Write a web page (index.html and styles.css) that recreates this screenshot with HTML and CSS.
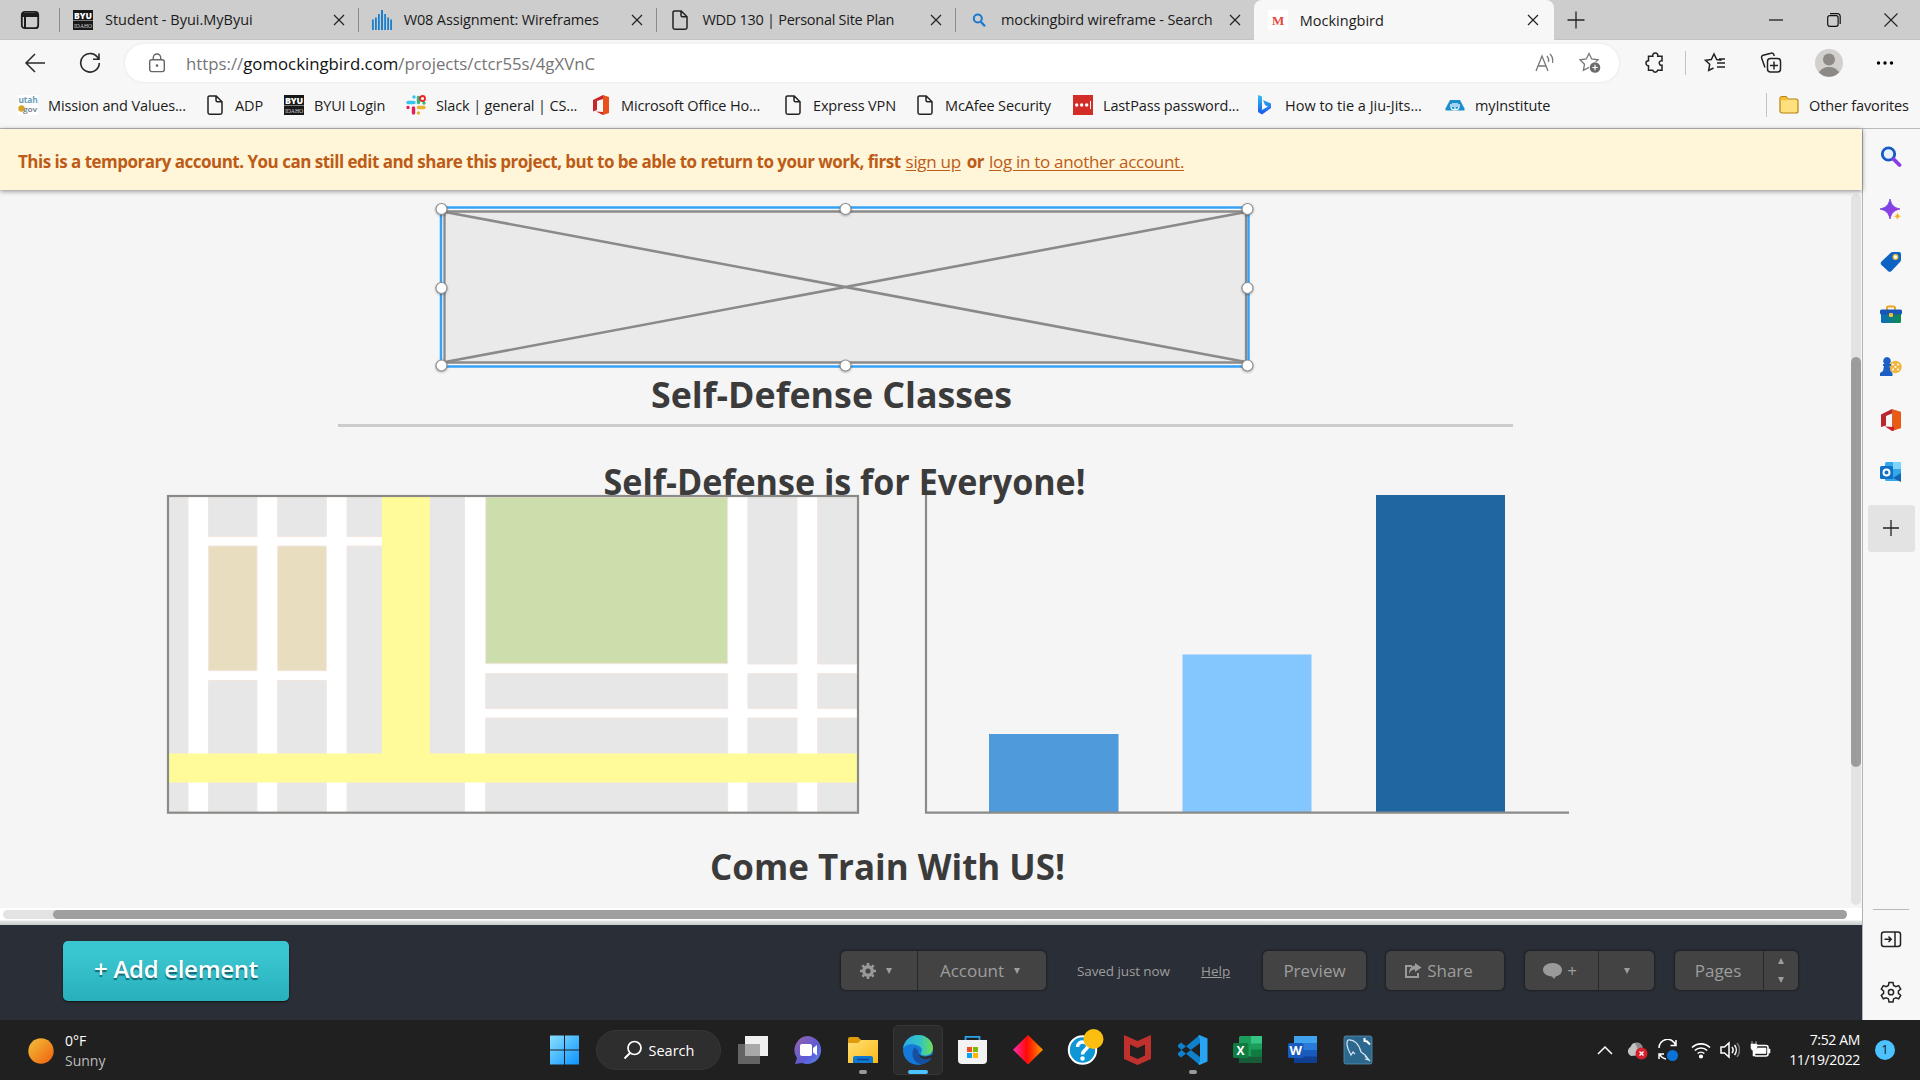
FILE: index.html
```html
<!DOCTYPE html>
<html lang="en">
<head>
<meta charset="utf-8">
<title>Mockingbird</title>
<link rel="stylesheet" href="styles.css">
</head>
<body>
<svg class="defs" width="0" height="0">
  <defs>
    <symbol id="doc" viewBox="0 0 20 20"><path d="M4 .9h7.2L17 6.700V17.500a1.700 1.700 0 0 1-1.700 1.700H4.700A1.700 1.700 0 0 1 3 17.500V2.500A1.600 1.600 0 0 1 4.600.9M11 1v4.300a1.500 1.500 0 0 0 1.500 1.500H17" fill="none" stroke="#222" stroke-width="1.500"/></symbol>
    <symbol id="byu" viewBox="0 0 20 20"><path fill="#181818" d="M0 0h20v20H0z"/><path stroke="#999" stroke-width=".8" d="M0 10.500h20"/><text x="1" y="8.500" font-size="8" font-weight="900" textLength="18" lengthAdjust="spacingAndGlyphs" fill="#fff">BYU</text><text x="1" y="18" font-size="7" textLength="18" lengthAdjust="spacingAndGlyphs" font-family="Liberation Serif" fill="#ccc">IDAHO</text></symbol>
    <symbol id="x" viewBox="0 0 12 12"><path d="m1 1 10 10M11 1 1 11" fill="none" stroke="#222" stroke-width="1.200"/></symbol>
    <symbol id="office" viewBox="0 0 20 20"><path fill="#c9252d" d="M2 5 12 0v4L6 6v9l-4 1.500z"/><path fill="#e8501c" d="m12 0 6 2v16l-6 2z"/><path fill="#d52b1e" d="m5 16.500 7 .5v3z"/></symbol>
    <linearGradient id="gw" x2="1" y2="1"><stop stop-color="#8be0ff"/><stop offset="1" stop-color="#0a93ff"/></linearGradient>
    <linearGradient id="gsun" x2="1" y2="1"><stop stop-color="#f2c23a"/><stop offset="1" stop-color="#ef5f0c"/></linearGradient>
    <linearGradient id="gchat" x2="1" y2="1"><stop stop-color="#9a62a8"/><stop offset=".6" stop-color="#5b5bd6"/><stop offset="1" stop-color="#5a8af0"/></linearGradient>
    <linearGradient id="gfold" x2="1" y2="1"><stop stop-color="#ffdf75"/><stop offset="1" stop-color="#fbb917"/></linearGradient>
    <linearGradient id="gedge"><stop stop-color="#2aa9e8"/><stop offset=".6" stop-color="#35c5c0"/><stop offset="1" stop-color="#6ee04f"/></linearGradient>
    <linearGradient id="gdia"><stop stop-color="#ff2ab0"/><stop offset=".45" stop-color="#ff0a0a"/><stop offset=".6" stop-color="#ff2a00"/><stop offset="1" stop-color="#ff9c00"/></linearGradient>
    <linearGradient id="gbing" x2="0" y2="1"><stop stop-color="#2fc0f5"/><stop offset="1" stop-color="#1a56e8"/></linearGradient>
    <linearGradient id="gcopilot" x2="1" y2="1"><stop stop-color="#4a55e8"/><stop offset="1" stop-color="#c02ce0"/></linearGradient>
    <linearGradient id="gtool"><stop stop-color="#0a6cc4"/><stop offset="1" stop-color="#118a4a"/></linearGradient>
  </defs>
</svg>

<header class="tabs">
  <div class="tab-menu"><svg width="20" height="20" viewBox="0 0 20 20"><rect x="1.800" y="1.800" width="16.400" height="16.400" rx="3" fill="none" stroke="#1c1c1c" stroke-width="1.800"/><path d="M2 3h16v4H6v11H4V7H2z" fill="#1c1c1c"/></svg></div>
  <div class="tab"><svg class="fav"><use href="#byu"/></svg><span class="tab-title">Student - Byui.MyByui</span><svg class="close"><use href="#x"/></svg></div>
  <div class="tab"><svg class="fav" viewBox="0 0 20 20"><path fill="#1a7fcc" d="M0 9.500h1.800V20H0zM3 7.500h1.800V20H3zM6 4h1.800v16H6zM9 0h2v20H9zM12.200 4H14v16h-1.800zM15.200 7.500H17V20h-1.800zM18.200 9.500H20V20h-1.800z"/></svg><span class="tab-title tight">W08 Assignment: Wireframes</span><svg class="close"><use href="#x"/></svg></div>
  <div class="tab"><svg class="fav"><use href="#doc"/></svg><span class="tab-title tighter">WDD 130 | Personal Site Plan</span><svg class="close"><use href="#x"/></svg></div>
  <div class="tab"><svg class="fav" viewBox="0 0 20 20"><circle cx="8.800" cy="8.500" r="4" fill="none" stroke="#1a78d0" stroke-width="2"/><path d="m12 12 4 4.300" stroke="#1a78d0" stroke-width="2.400"/></svg><span class="tab-title tight">mockingbird wireframe - Search</span><svg class="close"><use href="#x"/></svg></div>
  <div class="tab active"><svg class="fav" viewBox="0 0 20 20"><path fill="#fff" d="M0 0h20v20H0z"/><text x="4" y="14.500" font-family="Liberation Serif" font-weight="700" font-size="13" fill="#e8453c">M</text></svg><span class="tab-title">Mockingbird</span><svg class="close"><use href="#x"/></svg></div>
  <svg class="newtab" width="18" height="18" viewBox="0 0 18 18"><path d="M9 .5v17M.5 9h17" stroke="#222" stroke-width="1.300"/></svg>
  <div class="winbtns">
    <svg width="14" height="14" viewBox="0 0 14 14"><path d="M0 7h14" stroke="#111" stroke-width="1.200"/></svg>
    <svg width="14" height="14" viewBox="0 0 14 14"><rect x=".7" y="2.700" width="10.400" height="10.600" rx="2" fill="none" stroke="#111" stroke-width="1.200"/><path d="M3 .7h7.500a2.700 2.700 0 0 1 2.700 2.700V11" fill="none" stroke="#111" stroke-width="1.200"/></svg>
    <svg width="14" height="14" viewBox="0 0 14 14"><path d="m.5.5 13 13m0-13-13 13" stroke="#222" stroke-width="1.100"/></svg>
  </div>
</header>

<div class="toolbar">
  <svg class="back" width="22" height="20" viewBox="0 0 22 20"><path d="M21 10H2m9-9-9 9 9 9" fill="none" stroke="#2a2a2a" stroke-width="1.500"/></svg>
  <svg class="reload" width="22" height="22" viewBox="0 0 22 22"><path d="M19.500 7A9.300 9.300 0 1 0 20.300 11M20 1.500V7.300h-6" fill="none" stroke="#2a2a2a" stroke-width="1.600"/></svg>
  <div class="url">
    <svg width="18" height="20" viewBox="0 0 18 20"><rect x="1.700" y="6.800" width="14.600" height="11.800" rx="2" fill="none" stroke="#666" stroke-width="1.400"/><path d="M5.300 6.500V4.700a3.700 3.700 0 0 1 7.400 0v1.800" fill="none" stroke="#666" stroke-width="1.400"/><circle cx="9" cy="12.600" r="1.300" fill="#666"/></svg>
    <span class="address">https://<b>gomockingbird.com</b>/projects/ctcr55s/4gXVnC</span>
    <svg width="20" height="20" viewBox="0 0 20 20" fill="none" stroke="#777" stroke-width="1.300"><path d="M1 18 7 3l6 15M3 13h8M12 3a7 7 0 0 1 1.500 6M15 1a10 10 0 0 1 2.500 9"/></svg>
    <svg class="star" width="22" height="22" viewBox="0 0 22 22"><path d="M10 1.500 12.700 7l6.300.8-4.600 4.400 1.100 6.200L10 15.500 4.400 18.400l1.100-6.200L1 7.800 7.300 7z" fill="none" stroke="#777" stroke-width="1.300"/><circle cx="16" cy="15.500" r="6" fill="#fff"/><circle cx="16" cy="15.500" r="5.300" fill="#6b6b6b"/><path d="M16 12.800v5.400M13.300 15.500h5.400" stroke="#fff" stroke-width="1.200"/></svg>
  </div>
  <div class="actions">
    <svg width="22" height="22" viewBox="0 0 22 22"><path d="M4.500 4.300h4.300a2.600 2.600 0 1 1 5 0h4.200v4.500a2.300 2.300 0 1 0 0 4.500v5h-4.300a2.600 2.600 0 0 1-5 0H4.500v-4.500a2.500 2.500 0 1 1 0-5z" fill="none" stroke="#222" stroke-width="1.500"/></svg>
    <i class="sep"></i>
    <svg width="22" height="22" viewBox="0 0 22 22"><path d="M17.500 8.200 12.700 7.500 10 2 7.300 7.500 1.500 8.300l4.200 4-1 6.200L9.500 16M13 11h8M13 15h8M15 7h6" fill="none" stroke="#222" stroke-width="1.500"/></svg>
    <svg width="22" height="22" viewBox="0 0 22 22"><rect x="7.500" y="6.500" width="13" height="13.500" rx="3" fill="none" stroke="#222" stroke-width="1.500"/><path d="M14 9.500v8M10 13.500h8M5 15.500 1.700 6.200a2.200 2.200 0 0 1 1.500-3L11 1.200A2.300 2.300 0 0 1 14 3v1" fill="none" stroke="#222" stroke-width="1.500"/></svg>
    <svg width="28" height="28" viewBox="0 0 28 28"><circle cx="14" cy="14" r="14" fill="#d2d0cd"/><circle cx="14" cy="10.500" r="6" fill="#8d8985"/><path d="M4 23.500c3-7.500 17-7.500 20 0a14 14 0 0 1-20 0" fill="#8d8985"/></svg>
    <svg width="18" height="6" viewBox="0 0 18 6"><circle cx="2.500" cy="3" r="1.700"/><circle cx="9" cy="3" r="1.700"/><circle cx="15.500" cy="3" r="1.700"/></svg>
  </div>
</div>

<nav class="bookmarks">
  <a><svg viewBox="0 0 20 20"><path fill="#fff" d="M0 0h20v20H0z"/><circle cx="3.500" cy="13.500" r="3.200" fill="#d9a520"/><text x=".5" y="8" font-size="8" font-weight="700" fill="#6a9ab5" textLength="19" lengthAdjust="spacingAndGlyphs">utah</text><text x="5" y="17" font-size="7" font-weight="700" fill="#7f8b94" textLength="14" lengthAdjust="spacingAndGlyphs">gov</text></svg>Mission and Values...</a>
  <a><svg><use href="#doc"/></svg>ADP</a>
  <a><svg><use href="#byu"/></svg>BYUI Login</a>
  <a><svg viewBox="0 0 20 20" fill="none" stroke-width="3.400" stroke-linecap="round"><path stroke="#36c5f0" d="M8 2v0M2 7.500h6"/><path stroke="#2eb67d" d="M12.500 2.500v5M18 8v0"/><path stroke="#ecb22e" d="M12.500 12.500h5.500M12.500 18v0"/><path stroke="#e01e5a" d="M7.500 13v5M2 12.500v0"/><circle cx="16.500" cy="3.500" r="2.500" stroke="#e22" fill="#fff" stroke-width="1.800"/></svg>Slack | general | CS...</a>
  <a><svg><use href="#office"/></svg>Microsoft Office Ho...</a>
  <a><svg><use href="#doc"/></svg>Express VPN</a>
  <a><svg><use href="#doc"/></svg>McAfee Security</a>
  <a><svg viewBox="0 0 20 20"><path fill="#d32d27" d="M0 0h20v20H0z"/><circle cx="3.700" cy="10" r="1.700" fill="#fff"/><circle cx="8.700" cy="10" r="1.700" fill="#fff"/><circle cx="13.700" cy="10" r="1.700" fill="#fff"/><path d="M17.500 6v8" stroke="#fff"/></svg>LastPass password...</a>
  <a class="bing"><svg viewBox="0 0 20 20"><path fill="url(#gbing)" d="m3 0 4 1.500V15l6-3.500-3-1.500-2-5 8 3.500v4.500L7 19.500l-4-2.500z"/></svg>How to tie a Jiu-Jits...</a>
  <a><svg viewBox="0 0 20 20"><path fill="#1a8fd0" d="M5 5h10l4.500 8.500v2H.5v-2z"/><path d="M6 9v3a3.500 2.500 0 0 0 8 0V9M10 8v6M8 8v4M12 8v4" fill="none" stroke="#fff" stroke-width="1.200"/></svg>myInstitute</a>
  <i class="sep"></i>
  <a><svg viewBox="0 0 20 20"><path d="M1 3.500a2 2 0 0 1 2-2h4l2 2.500h8a2 2 0 0 1 2 2V16a2 2 0 0 1-2 2H3a2 2 0 0 1-2-2z" fill="#ffe07f" stroke="#b48210" stroke-width="1.200"/><path d="M1.500 5V3.500A1.500 1.500 0 0 1 3 2h4l1.500 2L7 5.500z" fill="#f5bf2d"/></svg>Other favorites</a>
</nav>

<div class="body">
  <main class="page">
    <div class="banner"><strong>This is a temporary account. You can still edit and share this project, but to be able to return to your work, first</strong><a class="signup">sign up</a><strong class="or">or</strong><a class="login">log in to another account.</a></div>
    <div class="workspace">
      <svg class="canvas" viewBox="0 190 1851 718" width="1851" height="718">
        <g class="headings">
          <text x="651" y="407.500" textLength="361" lengthAdjust="spacingAndGlyphs">Self-Defense Classes</text>
          <text x="603.500" y="495" textLength="482" lengthAdjust="spacingAndGlyphs">Self-Defense is for Everyone!</text>
          <text x="710" y="879.500" textLength="355" lengthAdjust="spacingAndGlyphs">Come Train With US!</text>
        </g>
        <path d="M338 425.500h1175" stroke="#ccc" stroke-width="3"/>
        <rect x="441" y="207.500" width="807.500" height="159" fill="#f8f8f8" stroke="#35a2f8" stroke-width="2.500"/>
        <rect x="444.500" y="211.500" width="801.500" height="151" rx="2" fill="#eaeaea" stroke="#8a8a8a" stroke-width="2.300"/>
        <path d="m445 212 801 150M445 362l801-150" stroke="#8a8a8a" stroke-width="2.600"/>
        <g class="handles">
          <circle cx="441.500" cy="209" r="5.500"/><circle cx="845.500" cy="209" r="5.500"/><circle cx="1247.500" cy="209" r="5.500"/>
          <circle cx="441.500" cy="288" r="5.500"/><circle cx="1247.500" cy="288" r="5.500"/>
          <circle cx="441.500" cy="365.500" r="5.500"/><circle cx="845.500" cy="365.500" r="5.500"/><circle cx="1247.500" cy="365.500" r="5.500"/>
        </g>
        <rect x="168" y="496" width="690" height="317" fill="#fff"/>
        <g fill="#e7e7e7" stroke="#f3e6e0" stroke-width="1">
          <path d="M169 497h19v256.500h-19zM208.500 497h48.500v39.500h-48.500zM277.700 497h48.600v39.500h-48.600zM347 497h35v39.500h-35zM347 546h35v207.500h-35zM208.500 680.500h48.500v73h-48.500zM277.700 680.500h48.600v73h-48.600zM429.500 497h35v256.500h-35z"/>
          <path d="M747.900 497h49.100v167h-49.100zM817.700 497h39.300v167h-39.300zM485.700 673.500h242v35h-242zM747.900 673.500h49.100v35h-49.100zM817.700 673.500h39.300v35h-39.300zM485.700 718h242v35.500h-242zM747.900 718h49.100v35.500h-49.100zM817.700 718h39.300v35.500h-39.300z"/>
          <path d="M169 782.500h19v29.500h-19zM208.500 782.500h48.500v29.500h-48.500zM277.700 782.500h48.600v29.500h-48.600zM347 782.500h117.500v29.500H347zM485.700 782.500h242v29.500h-242zM747.900 782.500h49.100v29.500h-49.100zM817.700 782.500h39.300v29.500h-39.300z"/>
          <path fill="#e8ddbf" d="M208.500 546h48.500v124.700h-48.500zM277.700 546h48.600v124.700h-48.600z"/>
          <path fill="#cbdeab" d="M485.700 497h242v166.700h-242z"/>
        </g>
        <path fill="#fffb98" d="M382 497h47.800v256.500H857v29H169v-29h213z"/>
        <rect x="168" y="496" width="690" height="316.700" fill="none" stroke="#8a8a88" stroke-width="2.200"/>
        <path fill="#4e9ada" d="M989 734h129.500v78H989z"/>
        <path fill="#84c7ff" d="M1182.500 654.500h129V812h-129z"/>
        <path fill="#2066a1" d="M1376 495h129v317h-129z"/>
        <path d="M926 495v317.700h643" fill="none" stroke="#8a8a88" stroke-width="2.200"/>
      </svg>
      <div class="vtrack"><div class="vthumb"></div></div>
    </div>
    <div class="htrack"><div class="hrail"><div class="hthumb"></div></div></div>
    <footer class="dock">
      <div class="add">+ Add element</div>
      <div class="group settings">
        <div class="cell gear"><svg width="16" height="16" viewBox="0 0 16 16"><circle cx="8" cy="8" r="4.300" fill="none" stroke="#9a9a9a" stroke-width="3.400"/><path d="M8 0v16M0 8h16M2.300 2.300l11.400 11.400M13.700 2.300 2.300 13.700" stroke="#9a9a9a" stroke-width="2.600" stroke-dasharray="2.500 11 2.500"/></svg><i class="down"></i></div>
        <div class="cell account">Account<i class="down"></i></div>
      </div>
      <span class="saved">Saved just now</span>
      <a class="help">Help</a>
      <div class="group preview"><div class="cell">Preview</div></div>
      <div class="group share"><div class="cell"><svg width="18" height="16" viewBox="0 0 18 16"><path d="M8 3H2v11h12v-4" fill="none" stroke="#9a9a9a" stroke-width="2"/><path d="M11 0l6.500 4.500L11 9V6.500C8 6.500 6.500 8 5 11c0-5 2-8 6-8.500z" fill="#9a9a9a"/></svg>Share</div></div>
      <div class="group comment">
        <div class="cell"><svg width="20" height="16" viewBox="0 0 20 16"><path d="M9.500 0C15 0 19 3 19 6.800s-2.500 5.700-6 6.500L11 16l-2-2.500C4 13.300 0 10.500 0 6.800S4 0 9.500 0" fill="#9a9a9a"/></svg><span>+</span></div>
        <div class="cell"><i class="down"></i></div>
      </div>
      <div class="group pages">
        <div class="cell">Pages</div>
        <div class="steps"><i class="up"></i><i class="down"></i></div>
      </div>
    </footer>
  </main>

  <aside class="sidebar">
    <svg viewBox="0 0 22 22"><circle cx="8.500" cy="8" r="6.200" fill="#e6f1fb" stroke="#1659c7" stroke-width="2.800"/><path d="m13.500 13 6 6" stroke="#8a3be8" stroke-width="3.800" stroke-linecap="round"/></svg>
    <svg viewBox="0 0 22 22"><path fill="url(#gcopilot)" d="M10 0c1.700 6.500 3.500 8.300 10 10-6.500 1.700-8.300 3.500-10 10C8.300 13.500 6.500 11.700 0 10 6.500 8.300 8.300 6.500 10 0" stroke="#7a3fe4" stroke-width=".8" stroke-linejoin="round"/><path fill="#f5b11c" stroke="#f7f7f7" stroke-width=".5" d="M17.500 12.500c.6 3.500 1.300 4 4.500 4.700-3.200.7-3.900 1.300-4.500 4.800-.6-3.500-1.300-4.100-4.500-4.800 3.200-.7 3.900-1.200 4.500-4.700"/></svg>
    <svg viewBox="0 0 22 22"><path fill="#0d63c4" d="M13 1h6a2 2 0 0 1 2 2v6a3 3 0 0 1-1 2l-8.500 9a2.500 2.500 0 0 1-3.500 0l-6.500-6a2.500 2.500 0 0 1 0-3.500L10.500 2A4 4 0 0 1 13 1"/><circle cx="15.500" cy="6" r="2.400" fill="#fff" stroke="#f2b52c" stroke-width="1.300"/></svg>
    <svg viewBox="0 0 22 22"><path d="M7 6V3.700A1.200 1.200 0 0 1 8.200 2.500h5.600A1.200 1.200 0 0 1 15 3.700V6" fill="none" stroke="#eaa624" stroke-width="2"/><rect x="1" y="8" width="20" height="11" rx="1.500" fill="url(#gtool)"/><rect x="0" y="5.500" width="22" height="5" rx="1.500" fill="#1856b8"/><rect x="9" y="9" width="4" height="4" rx="1" fill="#f2bd3a"/></svg>
    <svg viewBox="0 0 22 22"><circle cx="15.500" cy="11" r="6.200" fill="#f3b63c"/><path d="M13 8.500v0M18 8.500v0M13 13.500v0M18 13.500v0M15.500 11v0" stroke="#fff" stroke-width="2" stroke-linecap="round"/><path fill="#1c5fc4" d="M7 1a4 4 0 0 1 2.500 7H11v2H9.500l1 5 2 2v3H0v-3l3-2 1-5H3V8h1.500A4 4 0 0 1 7 1"/></svg>
    <svg viewBox="0 0 22 22"><path fill="#b8282e" d="M1 5.500 12 0v4.500L6 7v9.500L1 18z"/><path fill="#d8602a" d="m12 0 9 3v16l-9 3z"/><path fill="#ea5a12" d="m14 1 7 2v16l-7 2z"/><path fill="#c8202e" d="m5 17.500 9 .500v3.500l-2 .5z"/></svg>
    <svg viewBox="0 0 22 22"><rect x="5" y="1" width="16" height="19" rx="1.500" fill="#35a8ea"/><path fill="#7fd4fb" d="M13 1h8v7h-8z"/><path fill="#1066b5" d="m21 12-8 5 8 4z"/><rect x="0" y="5" width="13" height="13" rx="1.500" fill="#0f70c8"/><circle cx="6.500" cy="11.500" r="3" fill="none" stroke="#fff" stroke-width="2"/></svg>
    <div class="addside"><svg viewBox="0 0 22 22"><path d="M11 3v16M3 11h16" stroke="#222" stroke-width="1.300"/></svg></div>
    <div class="sidefoot">
      <svg viewBox="0 0 22 22" fill="none" stroke="#222" stroke-width="1.500"><rect x="1.500" y="4" width="19" height="14.500" rx="2.500"/><path d="M15 4v14.500M4.500 11.200H11M8.500 8.500l2.700 2.700L8.500 14"/></svg>
      <svg viewBox="0 0 22 22" fill="none" stroke="#222" stroke-width="1.500"><path d="M9 1.500h4l.6 3 2.200 1.200 2.900-1.100 2 3.400-2.300 2v2.400l2.300 2-2 3.400-2.900-1.100-2.200 1.200-.6 3H9l-.6-3-2.200-1.200-2.900 1.100-2-3.400 2.300-2V10L1.300 8l2-3.400 2.900 1.100 2.200-1.200z"/><circle cx="11" cy="11.200" r="2.600"/></svg>
    </div>
  </aside>
</div>

<div class="taskbar">
  <div class="weather"><svg width="26" height="26" viewBox="0 0 26 26"><circle cx="13" cy="13" r="12.700" fill="url(#gsun)"/></svg><div>0°F<br><span>Sunny</span></div></div>
  <div class="apps">
    <div class="app"><svg viewBox="0 0 30 30"><path fill="url(#gw)" d="M0 .5h14v14H0zM15 .5H29v14h-14zM0 15.500h14v14H0zM15 15.500h14v14h-14z"/></svg></div>
    <div class="search"><svg width="20" height="20" viewBox="0 0 20 20"><circle cx="11.500" cy="8" r="6.500" fill="none" stroke="#fff" stroke-width="1.700"/><path d="m7 13-5.500 5.500" stroke="#fff" stroke-width="1.900"/></svg>Search</div>
    <div class="app"><svg viewBox="0 0 30 30"><path fill="#646464" d="M0 9h22v20H0z"/><path fill="#f0f0f0" d="M7 1h23v20H7z"/><path fill="#a9a9a9" d="M7 9h15v12H7z"/></svg></div>
    <div class="app"><svg viewBox="0 0 30 30"><path fill="url(#gchat)" d="M15 1a14 14 0 1 1-6 27l-7 1 2-6A14 14 0 0 1 15 1"/><rect x="7" y="9" width="12" height="12" rx="2" fill="#fff"/><path fill="#fff" d="m20 13 4-3v10.500l-4-3z"/></svg></div>
    <div class="app run"><svg viewBox="0 0 30 30"><path fill="#dd9c0b" d="M0 4a2 2 0 0 1 2-2h8l3 3v4H0z"/><path fill="url(#gfold)" d="M0 8h10l3-3h17v23H0z"/><path fill="#0f78d2" d="M5 28v-5a2 2 0 0 1 2-2h16a2 2 0 0 1 2 2v5z"/><path d="M9 24.500h12" stroke="#0a4a8c" stroke-width="1.500"/></svg></div>
    <div class="app current"><svg viewBox="0 0 30 30"><circle cx="15" cy="15" r="15" fill="#1479d8"/><path fill="url(#gedge)" d="M0 14C1 5 8 0 15 0c9 0 15 6.500 15 13 0 5-4 7.500-8 7.500-3 0-5-1-4-3 1.500-2 1-5-2-6.500C10 8 2 9 0 14"/><path fill="#164f9e" d="M12 12c-4 4-4 14 5 17 5 .500 10-2.500 12-6.500-7 4-14 0-14-6z"/><path fill="#2b2b2b" d="M15.500 13.500c-2 3 0 7 5 8 3 0 6.500-.500 9-2 .5 0 .5 1 0 2.500-4 3-11 3-13-1s-1.500-5-1-7.500"/></svg></div>
    <div class="app"><svg viewBox="0 0 30 30"><path d="M7.500 6V1.800h14V6" fill="none" stroke="#2aa3e8" stroke-width="1.800"/><path fill="#f3f3f3" d="M0 5h29v20a4 4 0 0 1-4 4H4a4 4 0 0 1-4-4z"/><path fill="#f04e22" d="M9 12h5v5H9z"/><path fill="#7fb900" d="M15 12h5v5h-5z"/><path fill="#05a4ee" d="M9 18h5v5H9z"/><path fill="#feb800" d="M15 18h5v5h-5z"/></svg></div>
    <div class="app"><svg viewBox="0 0 30 30"><path fill="url(#gdia)" d="m15 0 15 14.700L15 29.500 0 14.700z"/></svg></div>
    <div class="app"><svg viewBox="0 0 30 30" overflow="visible"><circle cx="14.500" cy="15" r="13.700" fill="#0f96d6" stroke="#fff" stroke-width="2"/><path d="M9.500 12c0-7 11.500-6 10 0-.7 3-5 3-5 7.500" fill="none" stroke="#fff" stroke-width="3.500"/><circle cx="14.500" cy="23.500" r="2.200" fill="#fff"/><circle cx="25.500" cy="4" r="10" fill="#fdbe0f"/></svg></div>
    <div class="app"><svg viewBox="0 0 30 30"><path fill="#c0302c" d="m1 0 13.500 6L28 0v24L14.500 30 1 24zM7 9.500v11l7.500 3.500 7.500-3.500v-11L14.500 13z" fill-rule="evenodd"/></svg></div>
    <div class="app run"><svg viewBox="0 0 30 30"><path fill="#0f80cc" d="m0 10 3-2.500L22 22v7.500h-1L0 12zM0 20l3 2.500L22 8V.5h-1L0 18z"/><path fill="#27a5f2" d="m21.500 0 8 3.500v23l-8 3.500-1-1 1.500-3V4l-1.500-3z"/></svg></div>
    <div class="app"><svg viewBox="0 0 30 30"><rect x="6" y="1" width="23" height="27" rx="1.500" fill="#1d9d5c"/><path fill="#35c481" d="M18 1h11v7.500H18z"/><path fill="#107c41" d="M18 14.500h11v7H18z"/><path fill="#185c37" d="M6 21.500h23V28H6z"/><rect x="0" y="8" width="15.500" height="15" rx="1.500" fill="#107c41"/><text x="3.500" y="20" font-size="12" font-weight="700" fill="#fff">X</text></svg></div>
    <div class="app"><svg viewBox="0 0 30 30"><rect x="6" y="1" width="23" height="27" rx="1.500" fill="#2a7ad8"/><path fill="#41a3ee" d="M6 1h23v7H6z"/><path fill="#185abd" d="M6 15h23v7H6z"/><path fill="#103f91" d="M6 21.500h23V28H6z"/><rect x="0" y="8" width="15.500" height="15" rx="1.500" fill="#185abd"/><text x="1.500" y="20" font-size="12" font-weight="700" fill="#fff" textLength="12.500" lengthAdjust="spacingAndGlyphs">W</text></svg></div>
    <div class="app"><svg viewBox="0 0 30 30"><rect x="1" y="1" width="28" height="28" rx="2" fill="#2c678e" stroke="#5b8fae" stroke-width=".8"/><path d="M7 18c-3-5-4-11-2-13 6-1 11 4 13 12l4 3 4 5-4-1M7 18l1 2 2-3 2 2M22 21l5 5" fill="none" stroke="#dbe7ee" stroke-width="1.200"/><path d="M21.500 3v3l2.500.5 3 3" fill="none" stroke="#fff" stroke-width="2"/></svg></div>
  </div>
  <div class="tray">
    <svg width="16" height="10" viewBox="0 0 16 10"><path d="m1 9 7-7 7 7" fill="none" stroke="#fff" stroke-width="1.500"/></svg>
    <svg width="22" height="20" viewBox="0 0 22 20"><path fill="#c4c4c4" d="M5 16a5 5 0 0 1-.5-9A6 6 0 0 1 16 7v8z"/><path fill="#8e8e8e" d="M9 3a6 6 0 0 1 8 5l-5 2z"/><circle cx="15.500" cy="13.500" r="6" fill="#d4202c"/><path d="m13.500 11.500 4 4m0-4-4 4" stroke="#fff" stroke-width="1.400"/></svg>
    <svg width="22" height="22" viewBox="0 0 22 22"><path d="M2 9A8.500 8.500 0 0 1 18.500 6M19 1v5.500h-5.500M2 20v-5h5M3 15.500a8 8 0 0 0 6 4.500" fill="none" stroke="#fff" stroke-width="1.500"/><circle cx="15.500" cy="16.500" r="5.500" fill="#0a74da"/></svg>
    <svg width="20" height="18" viewBox="0 0 20 18" fill="none" stroke="#fff" stroke-width="1.600"><path d="M1 6.500a13 13 0 0 1 18 0M3.800 9.500a9 9 0 0 1 12.400 0M6.700 12.500a4.800 4.800 0 0 1 6.600 0"/><circle cx="10" cy="15.500" r="1.300" fill="#fff"/></svg>
    <svg width="20" height="18" viewBox="0 0 20 18" fill="none" stroke="#fff" stroke-width="1.500"><path d="M1 6h3.500L9 2v14l-4.500-4H1zM12 6a5 5 0 0 1 0 6M14.500 4a8 8 0 0 1 0 10"/><path d="M17 2a11 11 0 0 1 0 14" stroke="#777"/></svg>
    <svg width="22" height="18" viewBox="0 0 22 18"><path d="M8 4.500h9a2 2 0 0 1 2 2V13a2 2 0 0 1-2 2H6" fill="none" stroke="#fff" stroke-width="1.600"/><path d="M9 7h8v5.500H6V10zM19.500 8H21v4h-1.500zM2 3h6v4a3 3 0 0 1-2 2.500V15H4V9.500A3 3 0 0 1 2 7zM3 0v3M7 0v3" fill="#fff" stroke="#fff" stroke-width=".6"/></svg>
    <div class="clock">7:52 AM<br>11/19/2022</div>
    <div class="notif">1</div>
  </div>
</div>
</body>
</html>
```
FILE: styles.css
```css
* { box-sizing: border-box; }
body {
  margin: 0; width: 1920px; height: 1080px; overflow: hidden;
  display: flex; flex-direction: column;
  font-family: "Open Sans", "Noto Sans", sans-serif;
  font-size: 14.500px; font-stretch: 92%; color: #1b1b1b; background: #f7f7f7;
}
svg { display: block; flex: none; }
.defs { position: absolute; }

.tabs { height: 40px; flex: none; display: flex; align-items: center; background: #cdcdcd; border-bottom: 1px solid #c3c3c3; white-space: nowrap; }
.tab-menu { width: 59px; padding-left: 20px; }
.tab { width: 298.700px; height: 100%; display: flex; align-items: center; padding: 0 13px 0 14px; position: relative; }
.tab::before { content: ""; position: absolute; left: 0; top: 8px; width: 1px; height: 24px; background: #8b8b8b; }
.tab .fav { width: 20px; height: 20px; margin-right: 12px; }
.tab .close { width: 12px; height: 12px; margin-left: auto; }
.tight { letter-spacing: -.14px; }
.tighter { letter-spacing: -.27px; }
.tab.active { background: #f7f7f7; border-radius: 8px 8px 0 0; height: 41px; margin-bottom: -1px; width: 300px; padding-right: 15px; }
.tab.active::before { display: none; }
.newtab { margin-left: 13px; }
.winbtns { margin-left: auto; display: flex; gap: 43.500px; padding-right: 22px; }

.toolbar { height: 46px; flex: none; display: flex; align-items: center; }
.back { margin-left: 24px; }
.reload { margin-left: 33px; }
.url { margin-left: 24px; width: 1494px; height: 38px; border-radius: 19px; background: #fff; display: flex; align-items: center; padding: 0 18px 0 23px; box-shadow: 0 0 3px #e2e2e2; }
.address { margin: 0 auto 0 20px; font-size: 16.800px; color: #757575; }
.address b { font-weight: 400; color: #111; }
.star { margin-left: 24px; }
.actions { flex: 1; display: flex; align-items: center; padding-left: 25px; }
.actions > :nth-child(2) { margin: 0 18px 0 19px; }
.actions > :nth-child(4) { margin: 0 33px 0 34px; }
.actions > :nth-child(6) { margin-left: 33px; }
.sep { width: 1px; height: 24px; background: #c4c4c4; }

.bookmarks { height: 43px; flex: none; padding: 0 0 4px 18px; display: grid; grid-template-columns: 187px 79px 122px 185px 192px 132px 158px 182px 190px 321px 13px 1fr; align-items: center; border-bottom: 1px solid #b9bbbe; white-space: nowrap; letter-spacing: -.14px; }
.bookmarks a { display: flex; align-items: center; gap: 10px; }
.bookmarks svg { width: 20px; height: 20px; }
.bookmarks .bing { letter-spacing: 0; }

.body { flex: 1; min-height: 0; display: flex; }
.page { width: 1863px; display: flex; flex-direction: column; border-right: 1px solid #b4b4b4; background: #f5f5f5; }
.banner { height: 61px; flex: none; display: flex; align-items: center; padding: 4px 0 0 18px; background: #fff6d9; color: #bd5b17; font-size: 17px; white-space: nowrap; box-shadow: 0 1px 5px rgba(0,0,0,.45); z-index: 1; }
.banner strong { font-weight: 700; letter-spacing: -.51px; }
.banner a { text-decoration: underline; text-underline-offset: 2px; letter-spacing: -.3px; }
.signup, .login { margin-left: 5px; }
.or { margin-left: 6px; }
.workspace { flex: 1; min-height: 0; display: flex; }
.headings { font-size: 35px; font-weight: 700; fill: #3b3b3b; }
.handles { fill: #fff; stroke: #8d8d8d; stroke-width: 1.200; filter: drop-shadow(0 1px 1px rgba(0,0,0,.3)); }
.vtrack { width: 10px; margin: 4px 0 3px; border-radius: 5px; background: #e3e3e3; padding-top: 163px; }
.vthumb { height: 410px; border-radius: 5px; background: #9c9c9c; }
.htrack { height: 17px; flex: none; background: linear-gradient(#fff 0 12px, #e4e5e5 13px, #c9cccb 17px); padding: 2px 15px 0 3px; }
.hrail { height: 9px; border-radius: 5px; background: #e3e3e3; padding-left: 50px; }
.hthumb { height: 9px; border-radius: 5px; background: #9f9f9f; }

.dock { height: 95px; flex: none; display: flex; align-items: center; padding: 0 0 4px 63px; background: #2a2e36; color: #9d9d9d; font-size: 17px; white-space: nowrap; }
.add { width: 226px; height: 60px; margin-right: 552px; display: flex; justify-content: center; padding-top: 11px; font-size: 24px; line-height: 34px; letter-spacing: -.3px; font-weight: 600; color: #fff; text-shadow: 0 2px 1px rgba(0,70,80,.7); border-radius: 5px; background: linear-gradient(#3ac6d0 20%, #28b0bc); box-shadow: 0 1px 2px #111; }
.group { height: 39px; display: flex; border-radius: 5px; background: #434343; box-shadow: 0 0 2px 1px #1c1f24; }
.cell { flex: 1; display: flex; align-items: center; justify-content: center; }
.cell + .cell, .steps { border-left: 1px solid #26282c; }
.settings { width: 205px; }
.gear { flex: none; width: 76px; padding-right: 7px; }
.gear .down { margin-left: 10px; }
.account { padding-right: 4px; }
.account .down { margin-left: 10px; }
.down, .up { display: block; border: 3.500px solid transparent; border-top: 6px solid #9d9d9d; border-bottom: 0; }
.up { border-top: 0; border-bottom: 6px solid #9d9d9d; }
.saved { margin-left: 31px; width: 93px; font-size: 13.500px; letter-spacing: -.1px; }
.help { margin-left: 31px; width: 30px; font-size: 13.500px; text-decoration: underline; }
.preview { margin-left: 32px; width: 103px; }
.share { margin-left: 20px; width: 118px; }
.share svg { margin-right: 5px; }
.share .cell { padding-right: 13px; }
.comment { margin-left: 21px; width: 129px; }
.comment .cell:first-child { flex: none; width: 73px; gap: 4px; padding-right: 3px; }
.pages { margin-left: 21px; width: 123px; }
.pages .cell { padding-right: 2px; }
.steps { width: 35px; display: flex; flex-direction: column; align-items: center; justify-content: space-around; }

.sidebar { flex: 1; display: flex; flex-direction: column; align-items: center; padding: 17px 1px 0 0; gap: 30.500px; }
.sidebar svg { width: 22px; height: 22px; }
.addside { width: 47px; height: 47px; margin-top: -9px; border-radius: 3px; background: #e3e3e3; display: grid; place-items: center; }
.sidefoot { margin-top: auto; width: 36px; height: 111px; border-top: 1px solid #b9b9b9; display: flex; flex-direction: column; align-items: center; gap: 31px; padding-top: 18px; }

.taskbar { height: 60px; flex: none; display: flex; align-items: center; background: #202020; color: #fff; }
.weather { width: 537px; padding: 1px 0 0 28px; display: flex; align-items: center; gap: 11px; font-size: 14px; line-height: 20px; }
.weather span { color: #bdbdbd; }
.apps { display: flex; align-items: center; }
.app { width: 50px; height: 50px; margin-right: 5px; padding: 10px; border-radius: 5px; position: relative; }
.app:first-child { margin: 0 6px 0 3px; }
.app svg { width: 30px; height: 30px; }
.search { width: 125px; height: 40px; margin-right: 7px; border-radius: 20px; background: #2e2e2e; border: 1px solid #363636; display: flex; align-items: center; justify-content: center; gap: 6px; font-size: 14.500px; }
.run::after, .current::after { content: ""; position: absolute; left: 21px; bottom: 1px; width: 8px; height: 4px; border-radius: 2px; background: #9a9a9a; }
.current { background: #2b2b2b; border: 1px solid #363636; padding: 9px; }
.current::after { left: 14px; bottom: 0; width: 20px; background: #4cc2ff; }
.tray { margin-left: auto; display: flex; align-items: center; gap: 9px; padding-right: 25px; }
.tray svg:first-child { margin-right: 4px; }
.tray svg:nth-child(3) { margin-right: 3px; }
.clock { width: 80px; margin-right: 6px; text-align: right; font-size: 14px; line-height: 20px; letter-spacing: -.35px; white-space: nowrap; }
.notif { width: 20px; height: 20px; border-radius: 50%; background: #4cc2ff; color: #111; font-size: 12px; line-height: 20px; text-align: center; }
```
